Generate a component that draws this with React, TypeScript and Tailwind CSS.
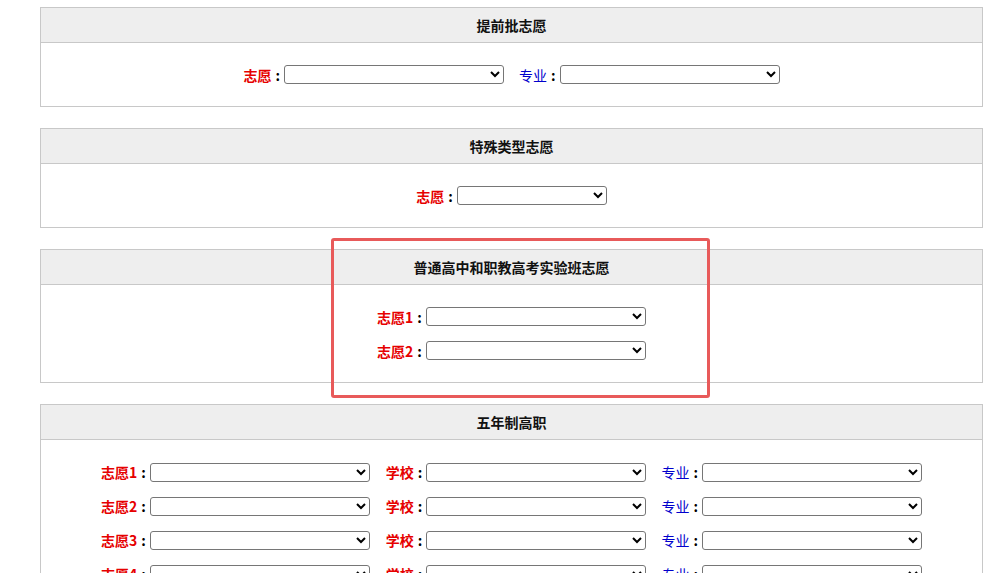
const Sel = ({ w = "w-[220px]" }: { w?: string }) => (
  <select className={`${w} h-[19px] border border-[#767676] rounded-[3px] bg-white text-xs`}>
    <option></option>
  </select>
);

const Label = ({ text, color = "red" }: { text: string; color?: "red" | "blue" }) => (
  <span
    className={
      color === "red"
        ? "text-[#e60000] font-bold"
        : "text-[#0000cc] font-normal"
    }
  >
    {text}
    <span className="text-black font-bold px-[4px]">:</span>
  </span>
);

const Panel = ({ title, children, body }: { title: string; children: React.ReactNode; body: string }) => (
  <div className="border border-[#c8c8c8] bg-white">
    <div className="h-[35px] bg-[#eeeeee] border-b border-[#c8c8c8] flex items-center justify-center font-bold text-[14px] text-[#111]">
      {title}
    </div>
    <div className={`flex flex-col items-center justify-center leading-[20px] ${body}`}>{children}</div>
  </div>
);

export default function App() {
  return (
    <div
      className="relative w-[984px] h-[573px] overflow-hidden bg-white text-[14px]"
      style={{ fontFamily: '"Noto Sans CJK SC", "Microsoft YaHei", sans-serif' }}
    >
      <div className="ml-[40px] mr-[1px] pt-[7px] flex flex-col gap-[21px]">
        <Panel title="提前批志愿" body="h-[63px]">
          <div className="flex items-center">
            <Label text="志愿" />
            <Sel />
            <span className="ml-[15px]"><Label text="专业" color="blue" /></span>
            <Sel />
          </div>
        </Panel>
        <Panel title="特殊类型志愿" body="h-[63px]">
          <div className="flex items-center">
            <Label text="志愿" />
            <Sel w="w-[150px]" />
          </div>
        </Panel>
        <Panel title="普通高中和职教高考实验班志愿" body="h-[97px] gap-[14px]">
          {[1, 2].map((i) => (
            <div key={i} className="flex items-center">
              <Label text={`志愿${i}`} />
              <Sel />
            </div>
          ))}
        </Panel>
        <Panel title="五年制高职" body="pt-[22px] pb-[20px] gap-[14px]">
          {[1, 2, 3, 4, 5].map((i) => (
            <div key={i} className="flex items-center">
              <Label text={`志愿${i}`} />
              <Sel />
              <span className="ml-[16px]"><Label text="学校" /></span>
              <Sel />
              <span className="ml-[15px]"><Label text="专业" color="blue" /></span>
              <Sel />
            </div>
          ))}
        </Panel>
      </div>
      <div className="absolute left-[331px] top-[238px] w-[379px] h-[160px] border-[3px] border-[#e85a5a] rounded-[3px]" />
    </div>
  );
}
